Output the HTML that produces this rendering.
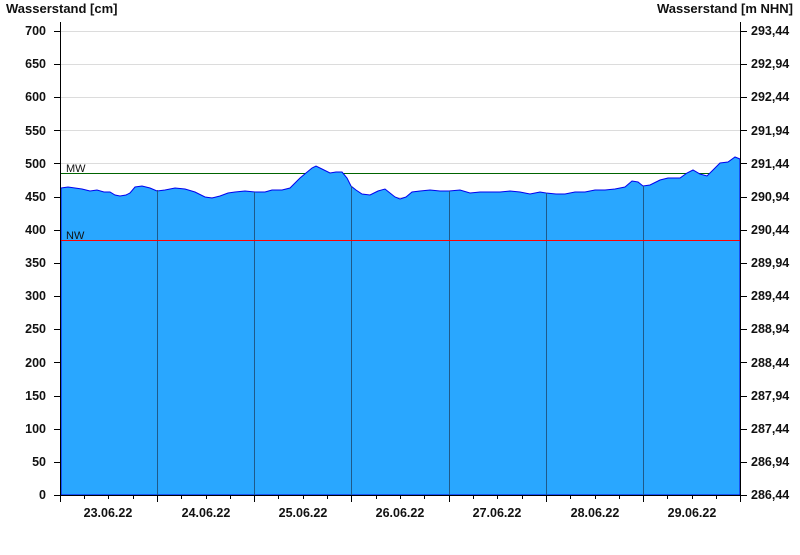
<!DOCTYPE html>
<html><head><style>
body{margin:0;background:#fff;width:800px;height:550px;overflow:hidden}
text{font-family:"Liberation Sans",Arial,sans-serif;font-weight:bold;font-size:12.5px;fill:#111}
</style></head><body>
<svg width="800" height="550" xmlns="http://www.w3.org/2000/svg" shape-rendering="crispEdges">
<text x="6" y="13" style="font-size:13px">Wasserstand [cm]</text>
<text x="793" y="13" text-anchor="end" style="font-size:13px">Wasserstand [m NHN]</text>
<g stroke="#dcdcdc">
<line x1="61" x2="740" y1="31.5" y2="31.5"/><line x1="61" x2="740" y1="64.5" y2="64.5"/>
<line x1="61" x2="740" y1="97.5" y2="97.5"/><line x1="61" x2="740" y1="130.5" y2="130.5"/>
<line x1="61" x2="740" y1="163.5" y2="163.5"/><line x1="61" x2="740" y1="197.5" y2="197.5"/>
</g>
<line x1="61" x2="740" y1="173.5" y2="173.5" stroke="#006400"/>
<path shape-rendering="auto" d="M61,188 L68,187 L75,188 L82,189 L90,191 L97,190 L104,192 L110,192 L115,195 L120,196 L126,195 L130,193 L135,187 L142,186 L150,188 L157,191 L165,190 L175,188 L185,189 L195,192 L205,197 L212,198 L220,196 L228,193 L235,192 L245,191 L255,192 L265,192 L272,190 L282,190 L290,188 L295,183 L300,178 L306,173 L312,168 L316,166 L322,169 L330,173 L336,172 L342,172 L347,178 L351,186 L356,190 L362,194 L370,195 L378,191 L385,189 L390,193 L395,197 L400,199 L406,197 L412,192 L420,191 L430,190 L440,191 L449,191 L460,190 L470,193 L480,192 L490,192 L500,192 L510,191 L520,192 L530,194 L540,192 L546,193 L556,194 L565,194 L575,192 L585,192 L595,190 L605,190 L615,189 L625,187 L632,181 L638,182 L643,186 L650,185 L660,180 L668,178 L680,178 L687,173 L693,170 L700,174 L707,176 L713,170 L720,163 L728,162 L735,157 L740,159 L740,495 L61,495 Z" fill="#29a7ff" stroke="#0000ee" stroke-width="1"/>
<g stroke="#1e5a8a"><line x1="157.5" x2="157.5" y1="190" y2="495"/><line x1="254.5" x2="254.5" y1="192" y2="495"/><line x1="351.5" x2="351.5" y1="186" y2="495"/><line x1="449.5" x2="449.5" y1="191" y2="495"/><line x1="546.5" x2="546.5" y1="193" y2="495"/><line x1="643.5" x2="643.5" y1="186" y2="495"/></g>
<line x1="61" x2="740" y1="240.5" y2="240.5" stroke="#ff0000"/>
<text x="66" y="172" style="font-weight:normal;font-size:11px">MW</text>
<text x="66" y="239" style="font-weight:normal;font-size:11px">NW</text>
<g stroke="#000">
<line x1="60.5" x2="60.5" y1="22" y2="502"/><line x1="740.5" x2="740.5" y1="22" y2="495"/>
<line x1="60" x2="741" y1="495.5" y2="495.5"/>
</g>
<g text-anchor="end">
<text x="46" y="35">700</text><text x="46" y="68">650</text><text x="46" y="101">600</text><text x="46" y="135">550</text><text x="46" y="168">500</text><text x="46" y="201">450</text><text x="46" y="234">400</text><text x="46" y="267">350</text><text x="46" y="300">300</text><text x="46" y="333">250</text><text x="46" y="367">200</text><text x="46" y="400">150</text><text x="46" y="433">100</text><text x="46" y="466">50</text><text x="46" y="499">0</text>
</g>
<g>
<text x="751" y="35">293,44</text><text x="751" y="68">292,94</text><text x="751" y="101">292,44</text><text x="751" y="135">291,94</text><text x="751" y="168">291,44</text><text x="751" y="201">290,94</text><text x="751" y="234">290,44</text><text x="751" y="267">289,94</text><text x="751" y="300">289,44</text><text x="751" y="333">288,94</text><text x="751" y="367">288,44</text><text x="751" y="400">287,94</text><text x="751" y="433">287,44</text><text x="751" y="466">286,94</text><text x="751" y="499">286,44</text>
</g>
<g text-anchor="middle">
<text x="108" y="517">23.06.22</text><text x="206" y="517">24.06.22</text><text x="303" y="517">25.06.22</text><text x="400" y="517">26.06.22</text><text x="497" y="517">27.06.22</text><text x="595" y="517">28.06.22</text><text x="692" y="517">29.06.22</text>
</g>
<g stroke="#000">
<line x1="54" x2="60" y1="31.5" y2="31.5"/><line x1="54" x2="60" y1="64.5" y2="64.5"/><line x1="54" x2="60" y1="97.5" y2="97.5"/><line x1="54" x2="60" y1="130.5" y2="130.5"/><line x1="54" x2="60" y1="163.5" y2="163.5"/><line x1="54" x2="60" y1="197.5" y2="197.5"/><line x1="54" x2="60" y1="230.5" y2="230.5"/><line x1="54" x2="60" y1="263.5" y2="263.5"/><line x1="54" x2="60" y1="296.5" y2="296.5"/><line x1="54" x2="60" y1="329.5" y2="329.5"/><line x1="54" x2="60" y1="362.5" y2="362.5"/><line x1="54" x2="60" y1="396.5" y2="396.5"/><line x1="54" x2="60" y1="429.5" y2="429.5"/><line x1="54" x2="60" y1="462.5" y2="462.5"/><line x1="54" x2="60" y1="495.5" y2="495.5"/>
<line x1="741" x2="747" y1="31.5" y2="31.5"/><line x1="741" x2="747" y1="64.5" y2="64.5"/><line x1="741" x2="747" y1="97.5" y2="97.5"/><line x1="741" x2="747" y1="130.5" y2="130.5"/><line x1="741" x2="747" y1="163.5" y2="163.5"/><line x1="741" x2="747" y1="197.5" y2="197.5"/><line x1="741" x2="747" y1="230.5" y2="230.5"/><line x1="741" x2="747" y1="263.5" y2="263.5"/><line x1="741" x2="747" y1="296.5" y2="296.5"/><line x1="741" x2="747" y1="329.5" y2="329.5"/><line x1="741" x2="747" y1="362.5" y2="362.5"/><line x1="741" x2="747" y1="396.5" y2="396.5"/><line x1="741" x2="747" y1="429.5" y2="429.5"/><line x1="741" x2="747" y1="462.5" y2="462.5"/><line x1="741" x2="747" y1="495.5" y2="495.5"/>
<line x1="157.5" x2="157.5" y1="495" y2="502"/><line x1="254.5" x2="254.5" y1="495" y2="502"/><line x1="351.5" x2="351.5" y1="495" y2="502"/><line x1="449.5" x2="449.5" y1="495" y2="502"/><line x1="546.5" x2="546.5" y1="495" y2="502"/><line x1="643.5" x2="643.5" y1="495" y2="502"/><line x1="740.5" x2="740.5" y1="495" y2="502"/>
<line x1="84.5" x2="84.5" y1="495" y2="499"/><line x1="108.5" x2="108.5" y1="495" y2="499"/><line x1="133.5" x2="133.5" y1="495" y2="499"/>
<line x1="181.5" x2="181.5" y1="495" y2="499"/><line x1="206.5" x2="206.5" y1="495" y2="499"/><line x1="230.5" x2="230.5" y1="495" y2="499"/>
<line x1="278.5" x2="278.5" y1="495" y2="499"/><line x1="303.5" x2="303.5" y1="495" y2="499"/><line x1="327.5" x2="327.5" y1="495" y2="499"/>
<line x1="376.5" x2="376.5" y1="495" y2="499"/><line x1="400.5" x2="400.5" y1="495" y2="499"/><line x1="424.5" x2="424.5" y1="495" y2="499"/>
<line x1="473.5" x2="473.5" y1="495" y2="499"/><line x1="497.5" x2="497.5" y1="495" y2="499"/><line x1="522.5" x2="522.5" y1="495" y2="499"/>
<line x1="570.5" x2="570.5" y1="495" y2="499"/><line x1="595.5" x2="595.5" y1="495" y2="499"/><line x1="619.5" x2="619.5" y1="495" y2="499"/>
<line x1="667.5" x2="667.5" y1="495" y2="499"/><line x1="692.5" x2="692.5" y1="495" y2="499"/><line x1="716.5" x2="716.5" y1="495" y2="499"/>
</g>
</svg>
</body></html>
